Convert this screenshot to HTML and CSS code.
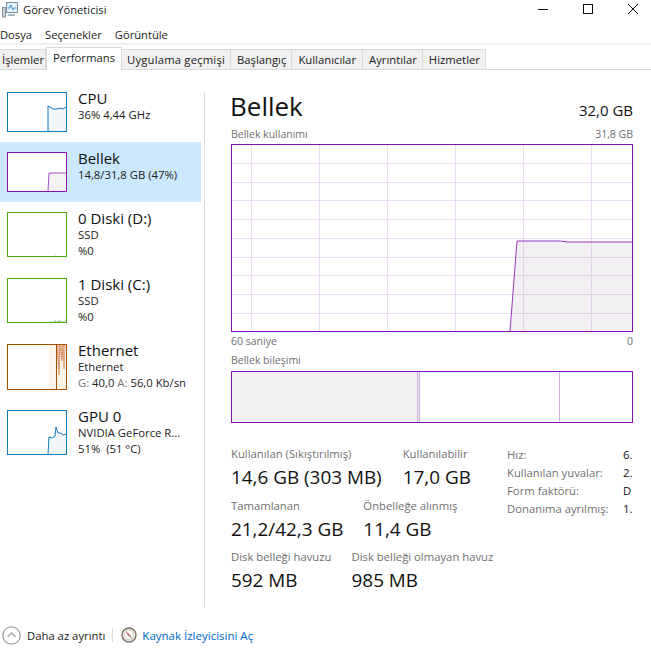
FILE: index.html
```html
<!DOCTYPE html>
<html lang="tr">
<head>
<meta charset="utf-8">
<title>Görev Yöneticisi</title>
<link rel="stylesheet" href="styles.css">
</head>
<body>
<div class="window">
  <header class="titlebar">
    <svg class="app-icon" width="16" height="16" viewBox="0 0 16 16"><rect x="4.500" y="0.500" width="11" height="10" fill="#e4f1fb" stroke="#7d8fa0"/><path d="M5.500 6h2l1.500-3 2 5 1-2h2.500" fill="none" stroke="#3d8fd0"/><rect x="0.500" y="5.500" width="3" height="9.500" fill="#c9d2d8" stroke="#8b979f"/><rect x="6" y="12" width="7" height="2" fill="#aab4bb"/></svg>
    <span class="app-title">Görev Yöneticisi</span>
    <div class="win-buttons">
      <svg width="10" height="10" viewBox="0 0 10 10"><path d="M0 5.500h10" stroke="#111"/></svg>
      <svg width="10" height="10" viewBox="0 0 10 10"><rect x="0.500" y="0.500" width="9" height="9" fill="none" stroke="#111"/></svg>
      <svg width="10" height="10" viewBox="0 0 10 10"><path d="M0 0l10 10M10 0L0 10" stroke="#111"/></svg>
    </div>
  </header>
  <nav class="menubar"><span>Dosya</span><span>Seçenekler</span><span>Görüntüle</span></nav>
  <div class="tabs">
    <span class="tab first">İşlemler</span>
    <span class="tab active">Performans</span>
    <span class="tab wide">Uygulama geçmişi</span>
    <span class="tab">Başlangıç</span>
    <span class="tab users">Kullanıcılar</span>
    <span class="tab">Ayrıntılar</span>
    <span class="tab">Hizmetler</span>
  </div>
  <main class="content">
    <aside class="sidebar">
      <div class="item item-short">
        <svg class="thumb short" viewBox="0 0 60 40"><path d="M41 39V14l2 1 3 2 4 0 3-1 3 1 3-2V39z" fill="#f1f6fb"/><path d="M41 39V14l2 1 3 2 4 0 3-1 3 1 3-2" fill="none" stroke="#117dbb"/><rect x="0.500" y="0.500" width="59" height="39" fill="none" stroke="#117dbb"/></svg>
        <div class="info"><div class="name">CPU</div><div class="sub">36% 4,44 GHz</div></div>
      </div>
      <div class="item item-short selected">
        <svg class="thumb short" viewBox="0 0 60 40"><rect x="0.500" y="0.500" width="59" height="39" fill="#fff"/><path d="M41 39l1-18h18v18z" fill="#f4f2f4"/><path d="M41 39l1-18h18" fill="none" stroke="#8b12ae" stroke-opacity=".75"/><rect x="0.500" y="0.500" width="59" height="39" fill="none" stroke="#8b12ae"/></svg>
        <div class="info"><div class="name">Bellek</div><div class="sub">14,8/31,8 GB (47%)</div></div>
      </div>
      <div class="item">
        <svg class="thumb tall" viewBox="0 0 60 45"><path d="M48 44h1" stroke="#4da60c" stroke-opacity=".6"/><rect x="0.500" y="0.500" width="59" height="44" fill="none" stroke="#4da60c"/></svg>
        <div class="info"><div class="name">0 Diski (D:)</div><div class="sub">SSD</div><div class="sub">%0</div></div>
      </div>
      <div class="item">
        <svg class="thumb tall" viewBox="0 0 60 45"><path d="M43 44h15M47 43h2M51 43h3M58 43h1M58 42h1" stroke="#4da60c" stroke-opacity=".55"/><rect x="0.500" y="0.500" width="59" height="44" fill="none" stroke="#4da60c"/></svg>
        <div class="info"><div class="name">1 Diski (C:)</div><div class="sub">SSD</div><div class="sub">%0</div></div>
      </div>
      <div class="item">
        <svg class="thumb taller" viewBox="0 0 60 46"><rect x="42" y="1" width="17" height="44" fill="#fcf3eb"/><path d="M50 1l2 30 1-30 2 16 1-16 1 24 1-24" fill="#f3d3b8" stroke="#d8946a" stroke-width=".8"/><path d="M52 2v24M55 2v12" stroke="#c9693a" stroke-dasharray="1 1"/><path d="M49.500 1v44" stroke="#a74f01"/><rect x="0.500" y="0.500" width="59" height="45" fill="none" stroke="#a74f01"/></svg>
        <div class="info"><div class="name">Ethernet</div><div class="sub">Ethernet</div><div class="sub"><span class="dim">G:</span> 40,0 <span class="dim">A:</span> 56,0 Kb/sn</div></div>
      </div>
      <div class="item">
        <svg class="thumb tall" viewBox="0 0 60 45"><path d="M41 44l1-17 3 1 3-2 1-9 2 6 3 0 2 2 4-1V44z" fill="#f1f6fb"/><path d="M41 44l1-17 3 1 3-2 1-9 2 6 3 0 2 2 4-1" fill="none" stroke="#117dbb"/><rect x="0.500" y="0.500" width="59" height="44" fill="none" stroke="#117dbb"/></svg>
        <div class="info"><div class="name">GPU 0</div><div class="sub">NVIDIA GeForce R...</div><div class="sub">51%&nbsp; (51 °C)</div></div>
      </div>
    </aside>
    <section class="panel">
      <div class="heading"><h1>Bellek</h1><span class="total">32,0 GB</span></div>
      <div class="caption-row usage"><span>Bellek kullanımı</span><span>31,8 GB</span></div>
      <svg class="chart" width="402" height="188" viewBox="0 0 402 188">
        <g stroke="#ecdcf3" stroke-width="1">
          <path d="M.500 19.500h401M.500 38.500h401M.500 56.500h401M.500 75.500h401M.500 94.500h401M.500 113.500h401M.500 131.500h401M.500 150.500h401M.500 169.500h401"/>
          <path d="M20.500 0v188M88.500 0v188M156.500 0v188M224.500 0v188M292.500 0v188M360.500 0v188"/>
        </g>
        <path d="M279 187L286 97h43l7 1h76l7 2h8v87z" fill="#7c6a88" fill-opacity=".1"/>
        <path d="M279 187L286 97h43l7 1h76l7 2h8" fill="none" stroke="#8b12ae" stroke-opacity=".85"/>
        <rect x="0.500" y="0.500" width="401" height="187" fill="none" stroke="#8b12ae"/>
      </svg>
      <div class="caption-row axis"><span>60 saniye</span><span>0</span></div>
      <div class="caption-row comp-label"><span>Bellek bileşimi</span></div>
      <div class="composition">
        <div class="seg used"></div>
        <div class="seg modified"></div>
        <div class="seg standby"></div>
        <div class="seg free"></div>
      </div>
      <div class="stats">
        <div class="stat-cols">
          <div class="stat-row gap-row1">
            <div class="stat"><div class="label">Kullanılan (Sıkıştırılmış)</div><div class="value">14,6 GB (303 MB)</div></div>
            <div class="stat"><div class="label">Kullanılabilir</div><div class="value">17,0 GB</div></div>
          </div>
          <div class="stat-row gap-row2">
            <div class="stat"><div class="label">Tamamlanan</div><div class="value">21,2/42,3 GB</div></div>
            <div class="stat"><div class="label">Önbelleğe alınmış</div><div class="value">11,4 GB</div></div>
          </div>
          <div class="stat-row gap-row3">
            <div class="stat"><div class="label">Disk belleği havuzu</div><div class="value">592 MB</div></div>
            <div class="stat"><div class="label">Disk belleği olmayan havuz</div><div class="value">985 MB</div></div>
          </div>
        </div>
        <dl class="specs">
          <dt>Hız:</dt><dd>6.</dd>
          <dt>Kullanılan yuvalar:</dt><dd>2.</dd>
          <dt>Form faktörü:</dt><dd>D</dd>
          <dt>Donanıma ayrılmış:</dt><dd>1.</dd>
        </dl>
      </div>
    </section>
  </main>
  <footer class="footer">
    <svg width="19" height="19" viewBox="0 0 19 19"><circle cx="9.500" cy="9.500" r="8.700" fill="#fff" stroke="#a3a3a3" stroke-width="1.300"/><path d="M5.500 11l4-4 4 4" fill="none" stroke="#a3a3a3" stroke-width="1.300"/></svg>
    <span class="less">Daha az ayrıntı</span>
    <span class="foot-sep"></span>
    <svg width="16" height="16" viewBox="0 0 16 16"><circle cx="8" cy="8" r="7" fill="#ece7df" stroke="#77716a" stroke-width="1.400"/><circle cx="8" cy="8" r="4.600" fill="#fff" stroke="#b9b2a8" stroke-width=".6"/><path d="M4.500 4l4.500 4-1.500 1z" fill="#c0392b"/><path d="M7.500 9l1.500-1 2.500 4z" fill="#8a8378"/></svg>
    <span class="link">Kaynak İzleyicisini Aç</span>
  </footer>
</div>
</body>
</html>
```
FILE: styles.css
```css
* { box-sizing: border-box; }
html, body { margin: 0; padding: 0; background: #fff; }
body { font-family: "Open Sans", "Noto Sans", "Liberation Sans", sans-serif; color: #111; }
.window { width: 651px; height: 657px; display: flex; flex-direction: column; overflow: hidden; font-size: 11.3px; }

.titlebar { height: 23px; flex: none; display: flex; align-items: flex-start; padding-left: 2px; }
.app-icon { margin-right: 5px; margin-top: 2px; }
.app-title { font-size: 11.2px; line-height: 16px; margin-top: 2px; color: #222; }
.win-buttons { margin-left: auto; display: flex; gap: 35px; padding-right: 13px; margin-top: 4px; }
.win-buttons svg { display: block; }

.menubar { height: 22px; flex: none; display: flex; gap: 13px; align-items: center; border-bottom: 2px solid #f0f0f0; font-size: 11.2px; padding-top: 2px; color: #222; }

.tabs { height: 25px; flex: none; display: flex; align-items: flex-end; border-bottom: 1px solid #d9d9d9; }
.tab { height: 20px; padding: 0 5px 0 6px; display: flex; align-items: center; background: #f0f0f0; border: 1px solid #d9d9d9; border-left: 0; border-bottom: 0; font-size: 11.3px; color: #222; white-space: nowrap; }
.tab.first { padding: 0 1px 0 2px; }
.tab.wide { letter-spacing: .17px; padding: 0 5px; }
.tab.users { padding-right: 6px; }
.tab.active { height: 23px; margin-bottom: -1px; background: #fff; padding: 0 6px 3px; border-left: 1px solid #d9d9d9; position: relative; }

.content { height: 537px; flex: none; display: flex; padding-top: 12px; }
.sidebar { width: 204px; flex: none; }
.item { width: 201px; height: 66px; display: flex; gap: 11px; padding: 10px 0 0 7px; align-items: flex-start; }
.item-short { height: 60px; }
.item.selected { background: #cce8ff; }
.thumb { flex: none; width: 60px; display: block; background: #fff; }
.thumb.short { height: 40px; }
.thumb.tall { height: 45px; }
.thumb.taller { height: 46px; }
.info { line-height: 15.5px; min-width: 0; }
.name { font-size: 15px; line-height: 18px; margin-top: -3px; }
.sub { font-size: 11.3px; color: #222; white-space: nowrap; }
.dim { color: #707070; }

.panel { flex: 1; margin-top: 11px; padding: 0 18px 0 26px; min-width: 0; border-left: 1px solid #d9d9d9; }
.heading { display: flex; justify-content: space-between; align-items: baseline; height: 33px; }
h1 { margin: 0 0 0 -1px; font-size: 26px; font-weight: 400; line-height: 26px; color: #111; }
.total { font-size: 15px; }
.caption-row { display: flex; justify-content: space-between; color: #707070; font-size: 10.5px; line-height: 14px; }
.usage { margin-top: 1px; margin-bottom: 3px; }
.chart { display: block; }
.axis { margin-top: 2px; }
.comp-label { margin-top: 5px; }
.composition { margin-top: 4px; width: 402px; height: 52px; border: 1px solid #8b12ae; display: flex; }
.seg { height: 100%; }
.used { width: 185px; background: #f3f0f4; }
.modified { width: 3px; background: #e9dff0; border-left: 1px solid #d3b3e0; border-right: 1px solid #d3b3e0; }
.standby { width: 140px; border-right: 1px solid #d3b3e0; }
.free { flex: 1; }

.stats { display: flex; margin-top: 23px; }
.stat-cols { width: 276px; flex: none; }
.stat-row { display: flex; height: 51.5px; white-space: nowrap; }
.gap-row1 { gap: 21px; }
.gap-row2 { gap: 20px; }
.gap-row3 { gap: 20px; }
.label { color: #707070; font-size: 11.3px; line-height: 16px; }
.value { font-size: 18.9px; line-height: 24px; margin-top: 3px; color: #111; }
.specs { margin: 0; display: grid; grid-template-columns: 116px 9px; grid-auto-rows: 18px; line-height: 18px; font-size: 11.3px; align-content: start; overflow: hidden; }
.specs dt { color: #707070; white-space: nowrap; }
.specs dd { margin: 0; overflow: hidden; }

.footer { flex: 1; display: flex; align-items: center; padding: 6px 0 0 2px; font-size: 11.3px; }
.less { margin-left: 6px; color: #222; }
.foot-sep { width: 1px; height: 14px; background: #d9d9d9; margin: 0 8px 0 7px; }
.link { color: #0066cc; margin-left: 5px; font-size: 11.5px; }
```
